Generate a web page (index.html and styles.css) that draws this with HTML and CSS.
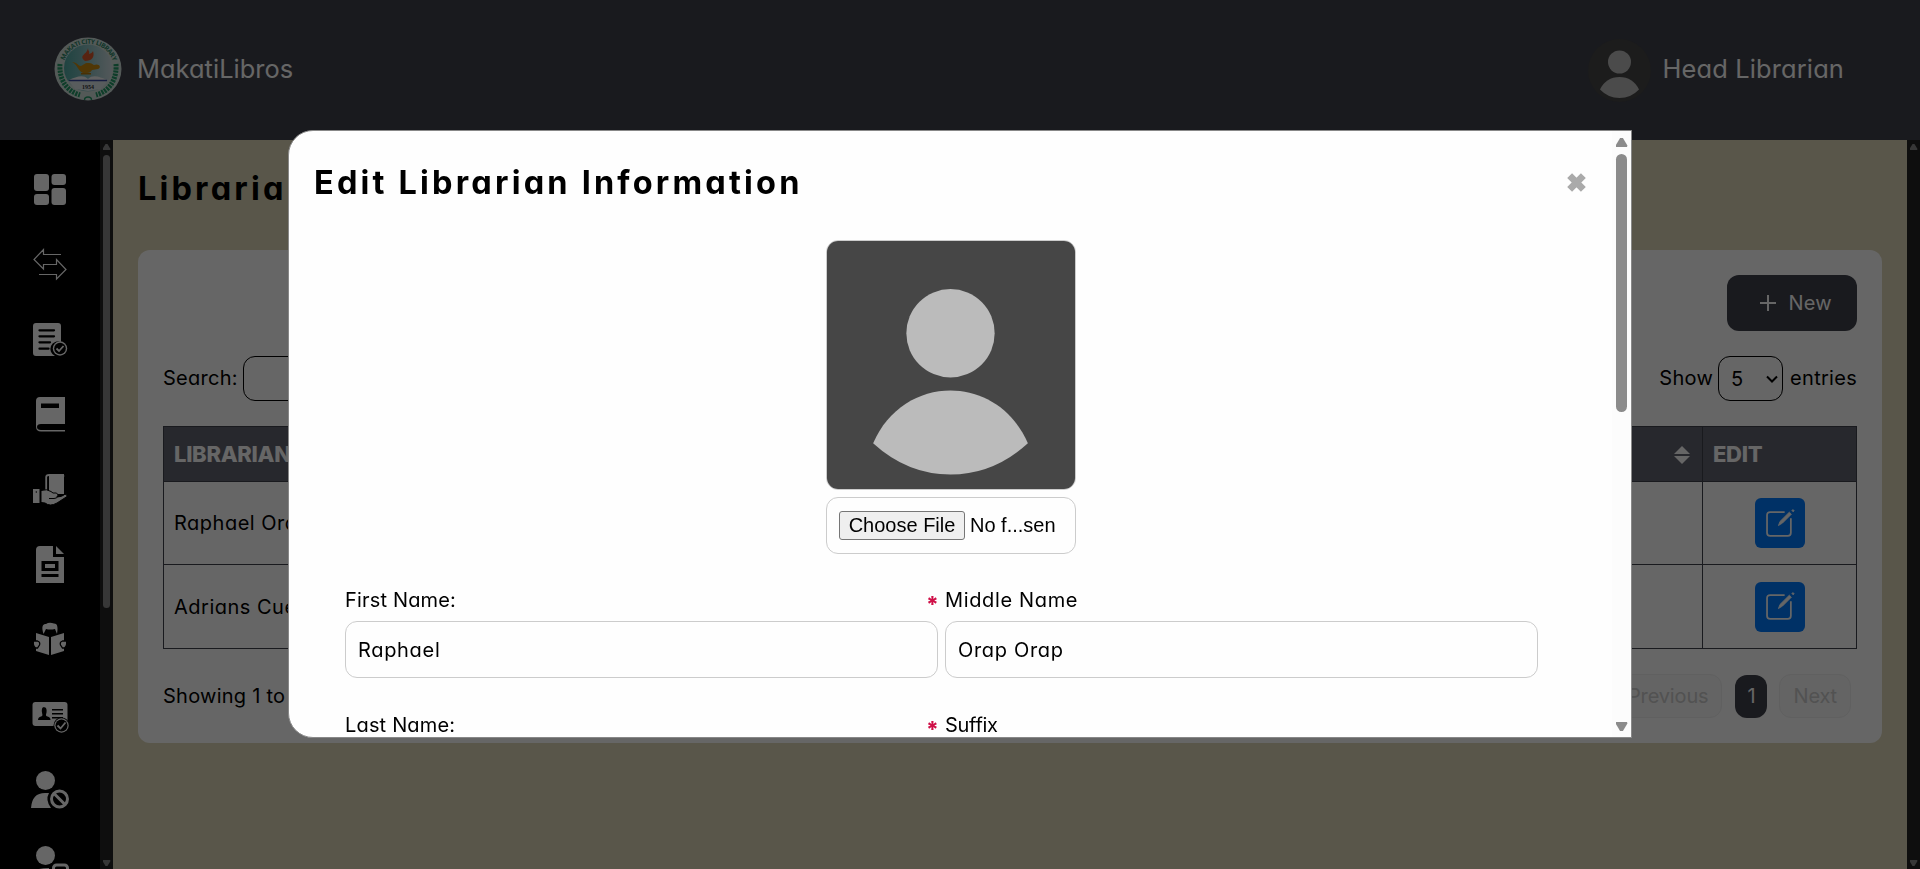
FILE: index.html
```html
<!DOCTYPE html>
<html lang="en"><head><meta charset="utf-8"><title>MakatiLibros</title><link rel="stylesheet" href="styles.css"></head><body>
<div class="page">
<header class="top">
<div class="brand"><svg class="logo" viewBox="54 36 68 64"><defs><linearGradient id="teal"><stop offset="0" stop-color="#4fa9a2"/><stop offset=".35" stop-color="#78b8b8"/><stop offset="1" stop-color="#d0dde2"/></linearGradient><path id="arc" d="M64.500 59.500A25.500 25 0 0 1 113.500 62.500"/></defs><ellipse cx="88" cy="68" rx="33.500" ry="31.500" fill="#cfdfda"/><ellipse cx="88" cy="67" rx="24" ry="23.500" fill="url(#teal)"/><path d="M68 80h40l-7 8-13 2-13-2z" fill="#dbe5e8"/><text class="seal"><textPath href="#arc" textLength="63">MAKATI CITY LIBRARY</textPath></text><path class="laurel" d="M60 63C59 78 66 90 80 94M116 63C117 78 110 90 96 94"/><path d="M85 60c-7-6 2-6 3-13 0 3 2 3 1 6 2-1 3-1 4-3 2 6-1 10-8 10z" fill="#d9582c"/><path d="M72 61c5 0 6 4 9 4 3-1 3-3 7-3s4 1 6 2c5-2 8 2 4 4l-6 1c-1 2-3 3-5 3h-4c-5-2-6-9-11-11z" fill="#c78a11"/><path d="M81 72h10v1.500H81z" fill="#b5790b"/><path d="M69 79c7-3 14-6 19-1 5-5 12-2 19 1z" fill="#f3f3f3"/><path d="M69 79.500h38" stroke="#3949a0" stroke-width="1.300"/><text class="year" x="82" y="87.500">1954</text><path d="M84.500 99q0-3 3.500-3t3.500 3" fill="none" stroke="#259a68" stroke-width="1.500"/></svg><span class="brandname">MakatiLibros</span></div>
<div class="user"><svg class="avatar" viewBox="0 0 63 63"><circle cx="31.500" cy="31.500" r="31.500" fill="#464646"/><circle cx="31.500" cy="23" r="11.500" fill="#bbb"/><path d="M12 50.500Q18 38 31.500 38T51 50.500Q43 59 31.500 59T12 50.500Z" fill="#bbb"/></svg><span class="username">Head Librarian</span></div>
</header>
<div class="body">
<nav class="side">
<svg viewBox="0 152 100 75"><rect x="34" y="174" width="15" height="17" rx="3"/><rect x="51.500" y="174" width="14.500" height="11" rx="3"/><rect x="34" y="194" width="15" height="11" rx="3"/><rect x="51.500" y="188" width="14.500" height="17" rx="3"/></svg>
<svg viewBox="0 227 100 75" class="line"><path d="M61 254.500H43.500V249.500L34 259.500 43.500 269V264.500H56.500V259.500L66 269.500 56.500 279V274.500H39"/></svg>
<svg viewBox="0 302 100 75"><path d="M36 323H58a3 3 0 0 1 3 3V342a7 7 0 0 0-6 14H36a3 3 0 0 1-3-3V326a3 3 0 0 1 3-3"/><path class="cut" d="M39.500 330.300H54M39.500 336.300H54M39.500 342.300H50M39.500 348.700H48.500"/><circle cx="60" cy="348.500" r="7.200"/><circle cx="60" cy="348.500" r="5.800" fill="#000"/><path class="tick" d="M56.500 348.500l2.500 2.500 4.500-5"/></svg>
<svg viewBox="0 377 100 75"><path d="M40 397H65V424H41q-4 0-4 3 0 3 4 3H65V431.500H41q-5 0-5-5V401q0-4 4-4"/><path d="M41 403.500H59V408H41z" fill="#000"/></svg>
<svg viewBox="0 452 100 75"><path d="M33 489H39.500V503H33zM49 476H64V494H49z"/><path d="M46.200 493V477q0-2 3-2H64M63.300 475v2" class="spine"/><path class="hand" d="M41 490.500q6-2 10 1l2 1.500h3.500q3 2 .5 4 5 0 8-2.800 2.500.3 2 2.300L57 503q-7 4-12 0l-4-.5z"/><path d="M49 498.500h5q3.500 0 3.500-2.500" fill="none" stroke="#000"/><circle cx="36.300" cy="492" r=".7" fill="#000"/></svg>
<svg viewBox="0 527 100 75"><path d="M40 546H53V557H64V583H36V550q0-4 4-4M56 546l8 8H56z"/><path d="M41.500 561H58.500V571H41.500zM41.500 574H58.500V577H41.500z" fill="#000"/><path d="M45 564H55V568H45z"/></svg>
<svg viewBox="0 602 100 75"><path d="M43.500 634C41 626 43 624 46 624q3-2 8-.5c4 0 4 5 3 10.500l-2-5q-5 1-9 0zM36 633l13 4V655l-13-4zM64 633l-13 4V655l13-4z"/><path class="notch" d="M33.500 641h4q3 1 2 4l-2 3h-2q-3-3-2-7M66.500 641h-4q-3 1-2 4l2 3h2q3-3 2-7"/></svg>
<svg viewBox="0 677 100 75"><rect x="32.500" y="702" width="35" height="24" rx="3"/><path d="M43.500 707c3 0 3.500 3 3 5.500-.7 3-1 3 1 4q3 .6 3 3.500H38q0-3 3-3.500c2-1 1.500-1 1-4-.5-2.500 0-5.500 2-5.500" fill="#000"/><path class="thin" d="M52 709.700H63M52 713.700H63M52 717.700H63"/><circle cx="61.500" cy="725.500" r="8" fill="#000"/><circle cx="61.500" cy="725.500" r="7.200"/><circle cx="61.500" cy="725.500" r="6" fill="#000"/><path class="tick" d="M57.500 725.500l3 3 5-6"/></svg>
<svg viewBox="0 752 100 75"><circle cx="45.500" cy="780.500" r="9.500"/><path d="M31 808q1-15 14-15h4q-4 7 2 15z"/><circle class="ring" cx="59.500" cy="799" r="8"/><path class="ring" d="M54 793.500l11 11"/></svg>
<svg viewBox="0 827 100 75"><circle cx="45.500" cy="855.500" r="9.500"/><path d="M39 869q4-1 10-1v4H39z"/><rect class="ring" x="53.500" y="865" width="14" height="14" rx="3"/></svg>
</nav>
<div class="bar sidebar-bar"><i class="up"></i><i class="thumb"></i><i class="down"></i></div>
<main>
<h1>Librarians</h1>
<section class="card">
<div class="actions"><button class="new"><svg viewBox="0 0 16 16"><path d="M8 0V16M0 8H16"/></svg><span class="t7">New</span></button></div>
<div class="filters"><label><span class="search-label t7">Search:</span><input class="search"></label><div class="show t7"><span>Show</span><span class="select">5<svg viewBox="0 0 12 8"><path d="M1 1.500L6 6.500 11 1.500"/></svg></span><span>entries</span></div></div>
<table><tr><th>LIBRARIAN NAME</th><th class="sort"><svg viewBox="0 0 16 18"><path d="M0 8L8 0l8 8zM0 10h16l-8 8z"/></svg></th><th class="edit-col">EDIT</th></tr>
<tr class="first"><td class="t9">Raphael Orap Orap</td><td></td><td class="center"><button class="edit"><svg viewBox="0 0 28 28"><path d="M18 4H4Q1 4 1 7V24Q1 27 4 27H21Q24 27 24 24V10"/><path class="pen" d="M12 17L13.500 13 22.500 4 24.500 6 16 14.500zM26 1.500l1.200 1.200-1 1-1.200-1.200z"/></svg></button></td></tr>
<tr><td class="t9">Adrians Cueto</td><td></td><td class="center"><button class="edit"><svg viewBox="0 0 28 28"><path d="M18 4H4Q1 4 1 7V24Q1 27 4 27H21Q24 27 24 24V10"/><path class="pen" d="M12 17L13.500 13 22.500 4 24.500 6 16 14.500zM26 1.500l1.200 1.200-1 1-1.200-1.200z"/></svg></button></td></tr></table>
<div class="foot"><span class="showing">Showing 1 to 2</span><div class="pages"><span class="pg">Previous</span><span class="current">1</span><span class="pg">Next</span></div></div>
</section></main>
<div class="bar"><i class="up"></i><i class="gap"></i><i class="down"></i></div>
</div></div>
<div class="overlay"><div class="modal"><div class="content">
<div class="mhead"><h2>Edit Librarian Information</h2><svg class="close" viewBox="0 0 18 18"><path d="M2.500 2.500L15.500 15.500M15.500 2.500L2.500 15.500"/></svg></div>
<div class="photo"><svg viewBox="0 0 250 250"><rect width="250" height="250" fill="#464646"/><circle cx="124.500" cy="93" r="44.500"/><path d="M46.500 204C77 133 172 133 202.500 204Q168 235.500 124.500 235.500T46.500 204Z"/></svg></div>
<div class="file"><span class="choose">Choose File</span><span>No f...sen</span></div>
<div class="form">
<div><div class="lab"><span class="l-name">First Name:</span><b>*</b></div><div class="inp">Raphael</div></div>
<div><div class="lab"><span class="l-mid">Middle Name</span></div><div class="inp">Orap Orap</div></div>
<div><div class="lab"><span class="l-name">Last Name:</span><b>*</b></div></div>
<div><div class="lab"><span class="l-suf">Suffix</span></div></div>
</div></div>
<div class="mbar"><i class="up"></i><i class="thumb"></i><i class="down"></i></div></div></div>
</body></html>
```
FILE: styles.css
```css
*{box-sizing:border-box}
body{margin:0;font:20px/30px Inter,sans-serif;font-feature-settings:"cv11";overflow:hidden;color:#000}
h1,h2{margin:0}
.page{height:869px;display:flex;flex-direction:column;overflow:hidden;background:#000}
.top{height:140px;flex:none;background:#3f414b;display:flex;justify-content:space-between;align-items:center;padding:0 76px 3px 54px;color:#fff;font-size:25.400px}
.brand,.user{display:flex;align-items:center}
.brandname{letter-spacing:.05px;padding-top:1px}
.username{letter-spacing:.15px;padding-top:1px}
.logo{width:68px;height:64px;margin-right:15px}
.seal{font:bold 6.500px "Open Sans",sans-serif;fill:#2b8466}
.laurel{fill:none;stroke:#259a68;stroke-width:5;stroke-dasharray:2.200 1}
.year{font:bold 6px "Liberation Serif",serif;fill:#333}
.avatar{width:63px;height:63px;margin:3px 12px 0 0}
.body{flex:1;display:flex;min-height:0}
.side{width:100px;padding-top:12px;overflow:hidden;flex:none}
.side svg{display:block;width:100px;height:75px;fill:#fff}
.side .line{fill:none;stroke:#fff;stroke-width:1.200}
.cut{stroke:#000;stroke-width:2.300;stroke-linecap:round;fill:none}
.tick{fill:none;stroke:#fff;stroke-width:1.800}
.thin{stroke:#000;stroke-width:1.600}
.notch{stroke:#000;stroke-width:1.300}
.spine{fill:none;stroke:#fff;stroke-width:1.800}
.hand{stroke:#000;stroke-width:1}
.side .ring{fill:none;stroke:#fff;stroke-width:3}
.bar{width:13px;flex:none;background:#232323;display:flex;flex-direction:column;align-items:center;padding:4px 0 3px}
.up,.down{width:8px;height:6px;background:#8b8b8b;clip-path:polygon(38% 0,62% 0,100% 85%,95% 100%,5% 100%,0 85%);flex:none}
.down{transform:scaleY(-1)}
.bar .thumb{width:7px;height:453px;border-radius:4px;background:#8b8b8b;margin:5px 0 auto}
.gap{flex:1}
main{flex:1;background:#ded7b9;padding:24px 25px 0}
h1{font-size:32.500px;line-height:50px;letter-spacing:3.150px;white-space:nowrap;margin-bottom:36px}
.card{background:#fff;border-radius:12px;height:493px;padding:25px}
.t7{letter-spacing:.28px}
.t9{letter-spacing:.5px}
.actions{display:flex;justify-content:flex-end}
.new{font:inherit;font-feature-settings:inherit;border:0;background:#3f414b;color:#fff;width:130px;height:56px;border-radius:12px;display:flex;align-items:center;padding:0 25px 0 33px;justify-content:space-between}
.new svg{width:16px;height:16px;stroke:#fff;stroke-width:2}
.filters{display:flex;justify-content:space-between;margin-top:25px;height:45px;align-items:center}
.filters label,.show{display:flex;align-items:center}
.filters span{padding-bottom:1px}
.search{width:300px;height:45px;border:1px solid #000;border-radius:12px;margin-left:5px;background:#fff}
.search-label{width:75px}
.filters .select{width:65px;height:45px;border:1px solid #000;border-radius:12px;margin:0 7px 0 5px;display:flex;align-items:center;justify-content:space-between;padding:0 4px 0 12px}
.select svg{width:12px;height:8px;fill:none;stroke:#000;stroke-width:2}
table{width:1694px;border-collapse:collapse;table-layout:fixed;margin-top:25px}
th,td{border:1px solid #3f414b;padding:0 10px;text-align:left;height:84px}
.first td{height:83px}
th{height:55px;background:#626470;color:#fff;font-size:22px;font-weight:800;letter-spacing:-.3px}
.sort{text-align:right;border-left:0}
.sort svg{width:16px;height:18px;fill:#fff;display:inline-block;margin-right:2px;vertical-align:-2px}
.edit-col{width:154px}
td.center{text-align:center}
.edit{width:50px;height:50px;background:#007bff;border:0;border-radius:6px;padding:0;display:inline-grid;place-items:center;vertical-align:middle}
.edit svg{width:29px;height:29px;margin:-2px 0 0 2px;fill:none;stroke:#fff;stroke-width:1.700}
.edit .pen{fill:#fff;stroke-width:.8}
.foot{display:flex;justify-content:space-between;align-items:center;margin-top:25px;height:44px;padding-right:6px}
.showing{letter-spacing:.25px}
.pages{display:flex;align-items:center}
.pg{border:1px solid #efefef;border-radius:12px;height:44px;line-height:42px;padding:0 13px;color:#ccc;background:#fafafa;letter-spacing:-.15px}
.current{background:#3f414b;color:#fff;border-radius:12px;width:32px;height:43px;line-height:42px;text-align:center;margin:0 12px 0 13px}
.overlay{position:fixed;inset:0;background:rgba(0,0,0,.6);padding:130px 0 0 288px}
.modal{width:1344px;height:608px;background:#fefefe;border:1px solid #888;border-radius:25px 0 0 25px;display:flex;overflow:hidden}
.content{flex:1;padding:27px 26px 0 25px;overflow:hidden}
.mhead{display:flex;justify-content:space-between;align-items:center;height:50px;margin-bottom:32px}
h2{font-size:32.500px;letter-spacing:3.180px;white-space:nowrap}
.close{width:19px;height:19px;stroke:#aaa;stroke-width:6.500;margin-top:-2px}
.photo{width:250px;height:250px;border-radius:12px;border:1px solid #ccc;overflow:hidden;margin:0 auto 7px 512px}
.photo svg{display:block;fill:#bbb}
.file{width:250px;height:57px;border:1px solid #ccc;border-radius:12px;margin:0 auto 29px 512px;font:20px "Liberation Sans",sans-serif;display:flex;align-items:center;padding-left:12px}
.choose{width:126px;height:29px;background:#efefef;border:1px solid #767676;border-radius:3px;text-align:center;line-height:27px;margin-right:5px}
.form{display:grid;grid-template-columns:593px 593px;column-gap:7px;padding-left:31px}
.lab{height:38px;line-height:34px;display:flex;justify-content:space-between}
.lab b{color:#cf0f47;width:12px;font-size:22px;font-weight:800;line-height:20px;padding-top:11px}
.l-name{letter-spacing:.17px}
.l-mid{letter-spacing:.65px}
.l-suf{letter-spacing:-.3px}
.inp{height:57px;border:1px solid #ccc;border-radius:12px;line-height:56px;padding-left:12px;margin-bottom:30px;letter-spacing:.68px}
.mbar{width:19px;background:#fcfcfc;display:flex;flex-direction:column;align-items:center;padding:7px 0 6px}
.mbar .up,.mbar .down{width:12px;height:9px;background:#8b8b8b}
.mbar .thumb{width:11px;height:258px;border-radius:6px;background:#8b8b8b;margin:7px 0 auto}
```
